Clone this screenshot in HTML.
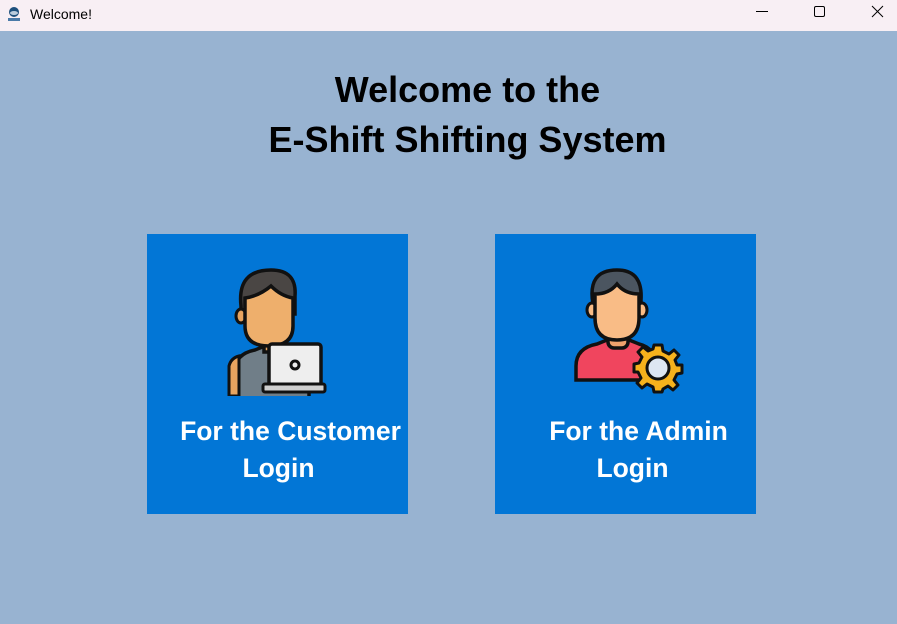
<!DOCTYPE html>
<html><head><style>
body{margin:0;width:897px;height:624px;background:#98b3d1;font-family:"Liberation Sans",sans-serif;position:relative;overflow:hidden}
.tb{position:absolute;left:0;top:0;width:897px;height:31px;background:#f8eff4}
.tb span{position:absolute;left:30px;top:6px;font-size:14px;color:#000}
.h{position:absolute;left:0;width:935px;text-align:center;font-weight:bold;font-size:36px;color:#000}
.card{position:absolute;top:234px;width:261px;height:280px;background:#0276d6}
.t{position:absolute;width:100%;text-align:center;color:#fff;font-weight:bold;font-size:26.5px;line-height:37px}
</style></head><body>
<div class="tb">
<svg style="position:absolute;left:6px;top:6px" width="16" height="18"><circle cx="8" cy="6" r="5" fill="#1d4f7c"/><ellipse cx="8" cy="7" rx="4" ry="2" fill="#bcd"/><rect x="2" y="12" width="12" height="3" fill="#4a7aa8"/></svg>
<span>Welcome!</span>
<svg style="position:absolute;left:750px;top:0" width="147" height="31"><line x1="6" y1="11.5" x2="18" y2="11.5" stroke="#000"/><rect x="64.5" y="6.5" width="10" height="10" rx="1.5" fill="none" stroke="#000"/><path d="M122 6L133 17M133 6L122 17" stroke="#000"/></svg>
</div>
<div class="h" style="top:69px">Welcome to the</div>
<div class="h" style="top:119px">E-Shift Shifting System</div>

<div class="card" style="left:147px">
<svg style="position:absolute;left:78px;top:32px" width="110" height="130">
<path d="M10 140V105Q10 88 30 84L40 80H58L68 84Q84 88 84 105V140Z" fill="#707e88" stroke="#111" stroke-width="3.5"/>
<path d="M4 100Q6 92 14 90V130H4Z" fill="#e8a460" stroke="#111" stroke-width="3"/>
<rect x="39" y="66" width="20" height="20" fill="#e8a460" stroke="#111" stroke-width="3.5"/>
<path d="M16 40Q12 4 46 4Q72 4 70 30V48H16Z" fill="#4a4644" stroke="#111" stroke-width="3.5"/>
<ellipse cx="16" cy="50" rx="5" ry="7" fill="#e8a460" stroke="#111" stroke-width="3"/>
<path d="M20 32Q34 30 46 20Q56 30 68 32V60Q68 80 44 80Q20 80 20 60Z" fill="#eeaf6c" stroke="#111" stroke-width="3.5"/>
<rect x="44" y="78" width="52" height="42" rx="3" fill="#eee" stroke="#111" stroke-width="3.5"/>
<rect x="38" y="118" width="62" height="8" rx="2" fill="#cfcfcf" stroke="#111" stroke-width="3"/>
<circle cx="70" cy="99" r="4" fill="#eee" stroke="#111" stroke-width="3"/>
</svg>
<div class="t" style="top:179px;left:13px">For the Customer</div>
<div class="t" style="top:216px;left:1px">Login</div>
</div>

<div class="card" style="left:495px">
<svg style="position:absolute;left:78px;top:32px" width="115" height="130">
<path d="M3 114V100Q3 82 24 78L34 74H56L66 78Q82 82 84 100V114Z" fill="#f0455e" stroke="#111" stroke-width="3.5"/>
<rect x="35" y="62" width="20" height="20" rx="6" fill="#f0a26d" stroke="#111" stroke-width="3.5"/>
<path d="M20 38Q14 4 44 4Q70 4 68 34L68 44H20Z" fill="#4b5560" stroke="#111" stroke-width="3.5"/>
<ellipse cx="19" cy="44" rx="5" ry="7" fill="#f9bc86" stroke="#111" stroke-width="3"/>
<ellipse cx="69" cy="44" rx="5" ry="7" fill="#f9bc86" stroke="#111" stroke-width="3"/>
<path d="M22 28Q36 28 44 18Q52 28 66 28V52Q66 74 44 74Q22 74 22 52Z" fill="#f9bc86" stroke="#111" stroke-width="3.5"/>
<g transform="translate(85,102)">
<path d="M-4-23H4L5-17L11-14L16-18L21-13L17-8L19-3H24V5L19 6L16 12L20 17L15 22L10 18L5 21L4 24H-4L-5 19L-11 16L-16 20L-21 15L-17 10L-20 4H-24V-4L-19-5L-16-11L-20-16L-15-21L-10-17L-5-19Z" fill="#f7b21c" stroke="#111" stroke-width="3" stroke-linejoin="round"/>
<circle r="11" fill="#dde6f2" stroke="#111" stroke-width="3"/>
</g>
</svg>
<div class="t" style="top:179px;left:13px">For the Admin</div>
<div class="t" style="top:216px;left:7px">Login</div>
</div>
</body></html>
